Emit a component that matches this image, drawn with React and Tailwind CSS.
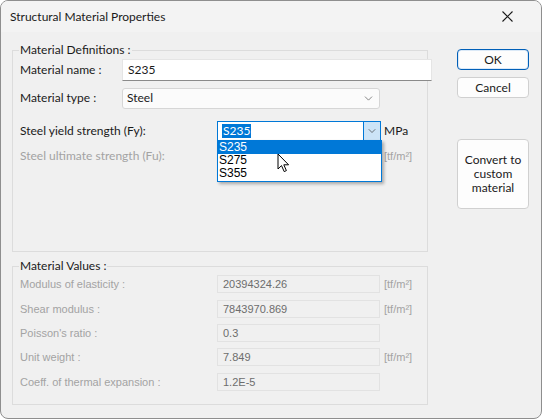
import { ChevronDown } from "lucide-react";

const ui = { fontFamily: 'Lato, "Noto Sans", sans-serif' };
const tahoma = { fontFamily: '"Liberation Sans", "DejaVu Sans", sans-serif' };

function Cursor() {
  return (
    <svg width="13" height="20" viewBox="0 0 13 20" className="absolute left-[276px] top-[152px]">
      <path
        d="M1 1 L1 16 L4.5 12.6 L7.2 18.6 L9.4 17.6 L6.8 11.8 L11.6 11.8 Z"
        fill="#fff"
        stroke="#000"
        strokeWidth="1"
        strokeLinejoin="round"
      />
    </svg>
  );
}

function Button({ children, primary, className = "" }) {
  return (
    <button
      className={`w-[72px] rounded-[4px] bg-[#fdfdfd] text-[12px] text-[#1a1a1a] ${
        primary ? "border border-[#005fb8] shadow-[inset_0_0_0_1px_#dbe9f7]" : "border border-[#d0d0d0]"
      } ${className}`}
      style={ui}
    >
      {children}
    </button>
  );
}

function ValueRow({ label, value, unit, mt }) {
  return (
    <div className={`flex items-center h-[18px] ${mt}`}>
      <div className="w-[197px] shrink-0 text-[11px] text-[#a3a3a3]" style={tahoma}>
        {label}
      </div>
      <div
        className="w-[163px] shrink-0 h-[18px] border border-[#e2e2e2] bg-[#f0f0f0] pl-[5px] text-[11px] leading-[16px] text-[#6d6d6d]"
        style={tahoma}
      >
        {value}
      </div>
      {unit && (
        <div className="ml-[4px] text-[11px] text-[#a3a3a3]" style={tahoma}>
          {unit}
        </div>
      )}
    </div>
  );
}

export default function App() {
  return (
    <div className="w-[542px] h-[419px] bg-[#f0f0f0] border border-[#8e8e8e] rounded-[8px] overflow-hidden relative" style={ui}>
      {/* title bar */}
      <div className="h-[31px] flex items-center justify-between bg-[#f3f3f3]">
        <div className="pl-[9px] text-[12px] text-[#1a1a1a]">Structural Material Properties</div>
        <svg width="11" height="11" viewBox="0 0 11 11" className="mr-[28px]">
          <path d="M0.5 0.5 L10.5 10.5 M10.5 0.5 L0.5 10.5" stroke="#1a1a1a" strokeWidth="1.1" />
        </svg>
      </div>

      <div className="flex">
        {/* left column */}
        <div className="ml-[11px] w-[416px] shrink-0">
          {/* group 1 */}
          <div className="relative mt-[18px] h-[202px] border border-[#dcdcdc]">
            <div className="absolute left-[6px] -top-[9px] px-[1px] bg-[#f0f0f0] text-[12px] leading-[16px] text-[#1a1a1a]">
              Material Definitions :
            </div>
            <div className="pl-[7px]">
              <div className="flex items-center h-[22px] mt-[8px]">
                <div className="w-[102px] shrink-0 text-[12px] text-[#1a1a1a]">Material name :</div>
                <div className="w-[310px] shrink-0 h-[22px] bg-white border border-[#e5e5e5] border-b-[#8a8a8a] pl-[5px] text-[12px] leading-[20px] text-[#1a1a1a]">
                  S235
                </div>
              </div>
              <div className="flex items-center h-[20px] mt-[7px]">
                <div className="w-[102px] shrink-0 text-[12px] text-[#1a1a1a]">Material type :</div>
                <div className="w-[258px] shrink-0 h-[21px] bg-[#fbfbfb] border border-[#d6d6d6] rounded-[3px] pl-[4px] flex items-center justify-between text-[12px] text-[#1a1a1a]">
                  <span>Steel</span>
                  <ChevronDown size={13} strokeWidth={1.3} className="mr-[4px] text-[#555]" />
                </div>
              </div>
              <div className="flex items-center h-[20px] mt-[13px]">
                <div className="w-[197px] shrink-0 text-[12px] text-[#1a1a1a]">Steel yield strength (Fy):</div>
                <div className="w-[164px] shrink-0 h-[20px] bg-white border border-[#0078d7] flex items-center justify-between">
                  <span className="ml-[4px] px-[1px] bg-[#0078d7] text-white text-[12px] leading-[14px]">S235</span>
                  <div className="w-[17px] h-[18px] bg-[#cce4f7] border-l border-[#0078d7] flex items-center justify-center">
                    <ChevronDown size={12} strokeWidth={1.3} className="text-[#333]" />
                  </div>
                </div>
                <div className="ml-[3px] text-[12px] text-[#1a1a1a]">MPa</div>
              </div>
              <div className="flex items-center h-[20px] mt-[5px]">
                <div className="w-[197px] shrink-0 text-[12px] text-[#a3a3a3]">Steel ultimate strength (Fu):</div>
                <div className="w-[164px] shrink-0" />
                <div className="ml-[3px] text-[11px] text-[#a3a3a3]" style={tahoma}>[tf/m²]</div>
              </div>
            </div>
          </div>

          {/* group 2 */}
          <div className="relative mt-[14px] h-[139px] border border-[#dcdcdc]">
            <div className="absolute left-[6px] -top-[9px] px-[1px] bg-[#f0f0f0] text-[12px] leading-[16px] text-[#1a1a1a]">
              Material Values :
            </div>
            <div className="pl-[7px] pt-[8px]">
              <ValueRow label="Modulus of elasticity :" value="20394324.26" unit="[tf/m²]" />
              <ValueRow label="Shear modulus :" value="7843970.869" unit="[tf/m²]" mt="mt-[7px]" />
              <ValueRow label="Poisson's ratio :" value="0.3" mt="mt-[6px]" />
              <ValueRow label="Unit weight :" value="7.849" unit="[tf/m²]" mt="mt-[6px]" />
              <ValueRow label="Coeff. of thermal expansion :" value="1.2E-5" mt="mt-[7px]" />
            </div>
          </div>
        </div>

        {/* right column */}
        <div className="ml-[29px] flex flex-col pt-[17px]">
          <Button primary className="h-[21px] leading-[15px]">OK</Button>
          <Button className="h-[21px] mt-[7px] leading-[15px]">Cancel</Button>
          <Button className="h-[70px] mt-[41px] flex flex-col items-center justify-center">
            <span className="block leading-[14px]">Convert to</span>
            <span className="block leading-[14px]">custom</span>
            <span className="block leading-[14px]">material</span>
          </Button>
        </div>
      </div>

      {/* open dropdown list */}
      <div
        className="absolute left-[216px] top-[139px] w-[165px] h-[42px] bg-white border border-[#0078d7] shadow-[2px_2px_3px_rgba(0,0,0,0.3)] text-[12px] text-[#000]"
        style={tahoma}
      >
        <div className="h-[13px] leading-[13px] pl-[1px] bg-[#0078d7] text-white">S235</div>
        <div className="h-[13px] leading-[13px] pl-[1px]">S275</div>
        <div className="h-[13px] leading-[13px] pl-[1px]">S355</div>
      </div>

      <Cursor />
    </div>
  );
}
